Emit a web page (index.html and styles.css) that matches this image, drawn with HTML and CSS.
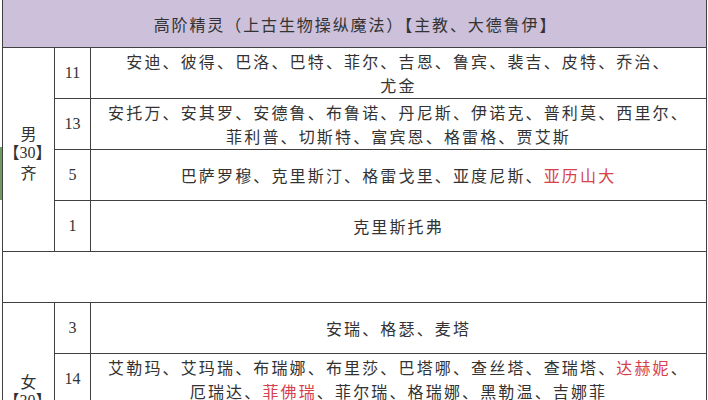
FILE: index.html
```html
<!DOCTYPE html>
<html lang="zh-CN">
<head>
<meta charset="utf-8">
<title>高阶精灵</title>
<link rel="stylesheet" href="styles.css">
</head>
<body>
<div class="sheet">
<table class="grid">
  <colgroup>
    <col class="c-sex">
    <col class="c-num">
    <col class="c-names">
  </colgroup>
  <tr class="r-head">
    <td class="head" colspan="3">高阶精灵（上古生物操纵魔法）【主教、大德鲁伊】</td>
  </tr>
  <tr class="r">
    <td class="sex male" rowspan="4">男<br><span class="br">【<span class="num">30</span>】</span><br>齐</td>
    <td class="num">11</td>
    <td class="names">安迪、彼得、巴洛、巴特、菲尔、吉恩、鲁宾、裴吉、皮特、乔治、<br>尤金</td>
  </tr>
  <tr class="r">
    <td class="num">13</td>
    <td class="names">安托万、安其罗、安德鲁、布鲁诺、丹尼斯、伊诺克、普利莫、西里尔、<br>菲利普、切斯特、富宾恩、格雷格、贾艾斯</td>
  </tr>
  <tr class="r">
    <td class="num">5</td>
    <td class="names">巴萨罗穆、克里斯汀、格雷戈里、亚度尼斯、<span class="red">亚历山大</span></td>
  </tr>
  <tr class="r">
    <td class="num">1</td>
    <td class="names">克里斯托弗</td>
  </tr>
  <tr class="r">
    <td class="gap" colspan="3"></td>
  </tr>
  <tr class="r">
    <td class="sex female" rowspan="4">女<br><span class="br">【<span class="num">30</span>】</span><br>齐</td>
    <td class="num">3</td>
    <td class="names">安瑞、格瑟、麦塔</td>
  </tr>
  <tr class="r">
    <td class="num">14</td>
    <td class="names">艾勒玛、艾玛瑞、布瑞娜、布里莎、巴塔哪、查丝塔、查瑞塔、<span class="red">达赫妮</span>、<br>厄瑞达、<span class="red">菲佛瑞</span>、菲尔瑞、格瑞娜、黑勒温、吉娜菲</td>
  </tr>
  <tr class="r">
    <td class="num">12</td>
    <td class="names">艾莉丝、贝拉、卡米拉、黛安娜、伊莉莎、菲奥娜、<br>格洛丽亚、海伦娜、艾琳、茱莉亚、凯拉、莉莉</td>
  </tr>
  <tr class="r">
    <td class="num">1</td>
    <td class="names">伊莎贝拉</td>
  </tr>
</table>
</div>
</body>
</html>
```

FILE: styles.css
```css
html, body {
  margin: 0;
  padding: 0;
  background: #ffffff;
}

body {
  width: 708px;
  height: 400px;
  overflow: hidden;
  position: relative;
  font-family: "Noto Sans CJK SC", "Noto Sans", sans-serif;
  color: #333333;
}

body::before {
  content: "";
  position: absolute;
  left: 0;
  top: 147px;
  width: 2px;
  height: 53px;
  background: #6f9a62;
}

.sheet {
  padding-left: 2px;
}

.grid {
  border-collapse: collapse;
  table-layout: fixed;
  width: 704px;
}

.c-sex { width: 52px; }
.c-num { width: 36px; }
.c-names { width: 616px; }

.grid td {
  border: 1px solid #404040;
  padding: 0;
  text-align: center;
  vertical-align: middle;
}

.r-head td {
  height: 47px;
}

.r td {
  height: 50px;
}

.head {
  background: #ccc0da;
  border-top: none !important;
  font-size: 16px;
  letter-spacing: 1.9px;
  line-height: 24px;
  padding-left: 2px !important;
}

.names {
  font-size: 16px;
  letter-spacing: 2.15px;
  line-height: 24px;
}

.num {
  font-family: "Liberation Serif", "Times New Roman", serif;
  font-size: 16px;
  letter-spacing: 0;
}

.sex {
  font-size: 16px;
  line-height: 18.5px;
}

.sex.male {
  padding-top: 6px !important;
}

.sex.female {
  padding-bottom: 8px !important;
}

.sex .br {
  display: inline-block;
  margin-left: -2px;
}

.red {
  color: #d8404c;
}

.gap {
  height: 50px;
}
```
